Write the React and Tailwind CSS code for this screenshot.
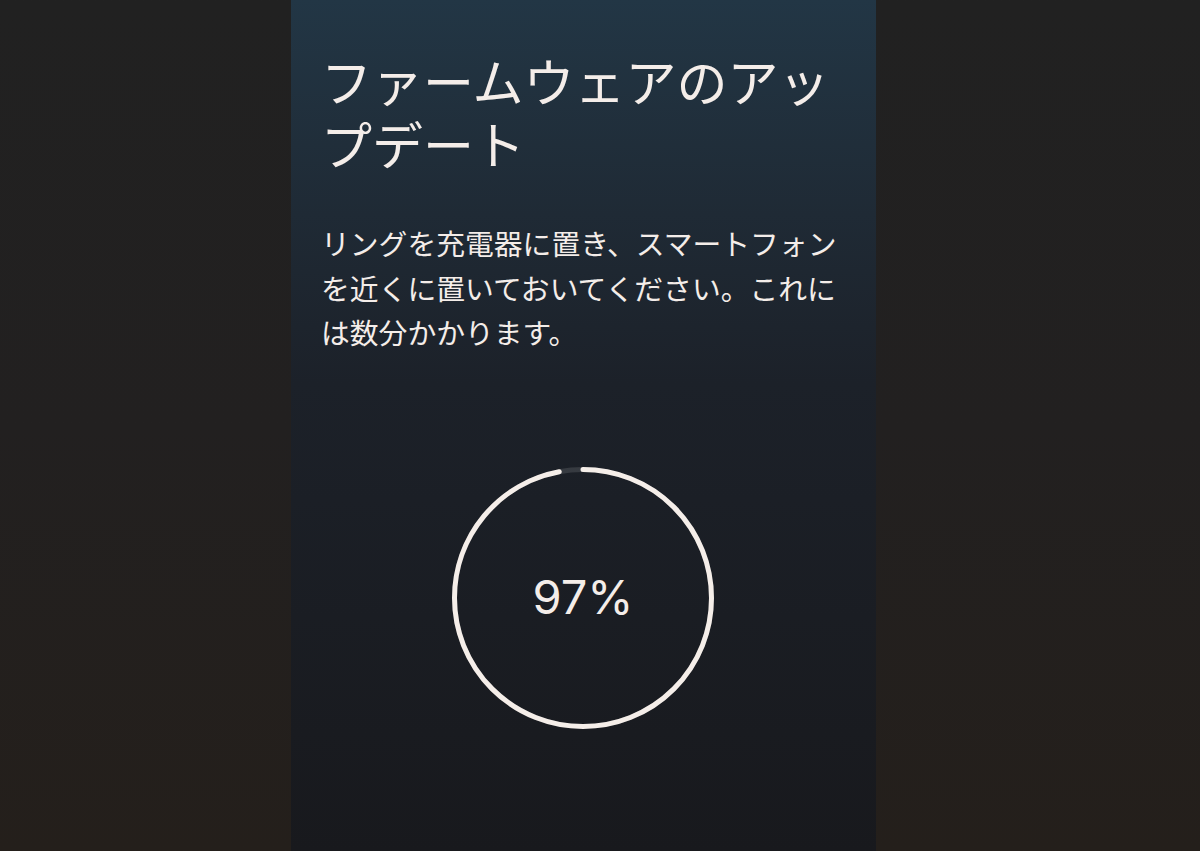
export default function App() {
  const r = 128.5;
  const c = 2 * Math.PI * r;
  const pct = 97;

  return (
    <div className="flex h-screen w-full bg-linear-to-b from-[#212121] via-[#222020] to-[#241f1b]">
      <div className="w-[291px] shrink-0" />
      <main
        className="flex w-[585px] shrink-0 flex-col bg-linear-to-b from-[#223645] via-[#1c2129] via-45% to-[#18191d] pl-[30px] pt-[49px] text-[#f4ede9]"
        style={{ fontFamily: '"Noto Sans CJK JP", "Noto Sans", sans-serif' }}
      >
        <div className="w-[525px]">
          <h1 className="text-[51px] font-normal leading-[63px]">ファームウェアのアップデート</h1>
          <p className="mt-[46px] text-[28.8px] font-normal leading-[44.5px]">
            リングを充電器に置き、スマートフォンを近くに置いておいてください。これには数分かかります。
          </p>
        </div>

        <div className="mt-[108px] flex justify-center pr-[31px]">
          <div className="relative h-[270px] w-[270px]">
            <svg width="270" height="270" viewBox="0 0 270 270" className="-rotate-90">
              <circle cx="135" cy="135" r={r} fill="none" stroke="rgba(255,255,255,0.12)" strokeWidth="5" />
              <circle
                cx="135"
                cy="135"
                r={r}
                fill="none"
                stroke="#f5eee9"
                strokeWidth="5"
                strokeLinecap="round"
                strokeDasharray={`${(c * pct) / 100} ${c}`}
              />
            </svg>
            <div
              className="absolute inset-0 flex items-center justify-center text-[47px] font-normal"
              style={{ fontFamily: 'Inter, "Liberation Sans", sans-serif' }}
            >
              {pct}%
            </div>
          </div>
        </div>
      </main>
      <div className="flex-1" />
    </div>
  );
}
